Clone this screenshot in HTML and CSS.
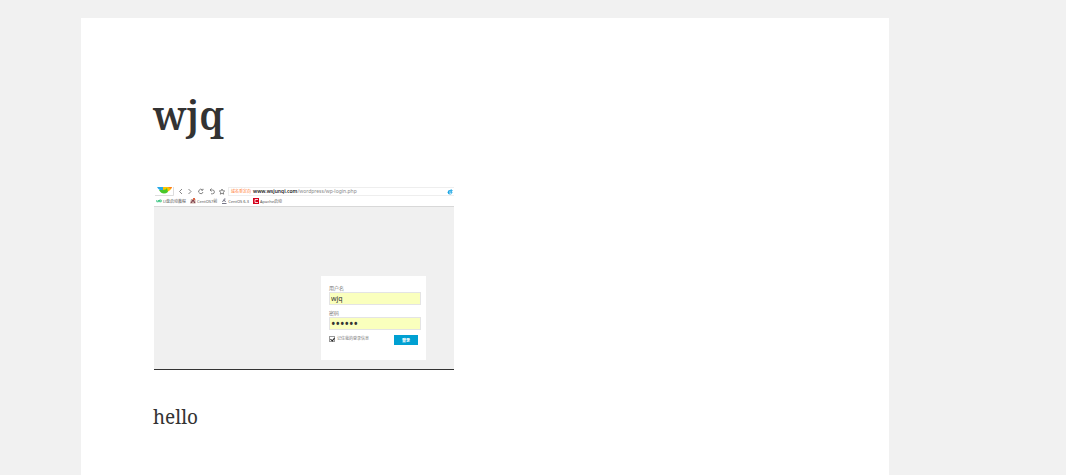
FILE: index.html
```html
<!DOCTYPE html>
<html lang="zh-CN">
<head>
<meta charset="utf-8">
<meta name="viewport" content="width=device-width, initial-scale=1">
<title>wjq</title>
<link rel="stylesheet" href="styles.css">
</head>
<body>
<article class="post">
  <h1 class="title">wjq</h1>
  <section class="shot">
    <div class="toolbar">
      <svg class="logo" width="20" height="9" viewBox="0 0 20 9"><path d="M3 0h7v4Q5 4 3 0z" fill="#26a9e8"/><path d="M9 0h9q-1 3-4 4.500L9 3z" fill="#ffc400"/><path d="M14 0h4l-1 2z" fill="#ff7a20"/><path d="M5 3l4 0q3 0 4-2l1 4q-2 1.500-4 1.500-3 0-5-3.500z" fill="#48c829"/><path d="M1 8.500h18.500V0" fill="none" stroke="#ddd"/></svg>
      <svg class="nav" width="50" height="9" viewBox="0 0 50 9" fill="none" stroke="#777" stroke-width=".9"><path d="M5 2L2.500 4.500 5 7M11.500 2L14 4.500 11.500 7M26 3V1.800M26 3.200h-1.700M25.500 3a2.200 2.200 0 1 0 .5 2M33 3h2.500a1.900 1.900 0 0 1 0 3.800h-1.500M34.500 1.500L33 3 34.500 4.500M45 2l.8 1.800 1.900.2-1.400 1.300.4 1.900-1.700-.9-1.700.9.400-1.900L42.300 4l1.900-.2z"/></svg>
      <div class="address"><span class="tag">域名重定向</span><span class="url"><b>www.wsjunqi.com</b>/wordpress/wp-login.php</span>
        <svg class="browser" width="6" height="6" viewBox="0 0 6 6"><circle cx="3" cy="3.300" r="2.300" fill="#1aa5e4"/><path d="M3.500 1H5v1" fill="none" stroke="#1aa5e4"/><path d="M2 3h2.500M2.500 4.500h2" stroke="#fff" stroke-width=".7"/></svg>
      </div>
    </div>
    <nav class="bookmarks">
      <a href="#"><svg width="6" height="6" viewBox="0 0 6 6"><path d="M.8 2v1.800h1.700V2M3.500 2v1.800h1.700V2z" fill="none" stroke="#31c27c" stroke-width=".9"/></svg>U盘启动教程</a>
      <a href="#"><svg width="6" height="6" viewBox="0 0 6 6"><path d="M1 1h4.500v4.500H0z" fill="#c9a9a0"/><path d="M1 5l2-3 2 3" fill="none" stroke="#734"/><path d="M3 0h2v2H3z" fill="#d64"/></svg>CentOS7前</a>
      <a href="#"><svg width="6" height="6" viewBox="0 0 6 6"><path d="M1 5.500h4.500M1.500 4L3 1.500 4.500 4M3 1h1.500" fill="none" stroke="#778"/></svg>CentOS 6.3</a>
      <a href="#"><svg width="6" height="6" viewBox="0 0 6 6"><path d="M0 0h6v6H0z" fill="#d5001c"/><path d="M5 1.500H2v3h3" fill="none" stroke="#fff" stroke-width=".8"/></svg>Apache启动</a>
    </nav>
    <div class="stage">
      <form class="login">
        <label for="user">用户名</label>
        <input class="field" id="user" type="text" value="wjq">
        <label for="pass">密码</label>
        <input class="field secret" id="pass" type="password" value="secret">
        <div class="actions">
          <label class="remember"><input class="tick" type="checkbox" checked>记住我的登录信息</label>
          <button class="submit" type="button">登录</button>
        </div>
      </form>
    </div>
  </section>
  <p class="text">hello</p>
</article>
</body>
</html>
```
FILE: styles.css
```css
* { box-sizing: border-box; }
html { background: #f1f1f1; }
body { margin: 0; padding-top: 18px; color: #333; font-family: "Noto Serif", "Droid Serif", "DejaVu Serif", serif; }
.post { width: 75.8%; min-height: calc(100vh - 18px); margin-left: 7.6%; padding: 73px 72px 48px; background: #fff; }
.title { margin: 0 0 48px; font-size: 39px; line-height: 48px; font-weight: 600; }
.text { margin: 33px 0 0; font-size: 19px; line-height: 28px; }
.shot { width: 300px; max-width: 100%; margin-left: 1px; border-bottom: 1px solid #333; background: #fff; font-family: "Noto Sans", "Noto Sans CJK SC", sans-serif; font-size: 5px; line-height: 7px; color: #666; }
.shot svg { flex: none; display: block; }
.toolbar { display: flex; height: 9px; align-items: center; }
.nav { margin-left: 3px; }
.address { display: flex; flex: 1; height: 9px; margin-left: 1px; padding: 0 1px 0 2px; align-items: center; border: solid #eee; border-width: 1px 0 1px 1px; white-space: nowrap; }
.tag { margin-right: 2px; font-size: 4px; color: #ff7429; }
.url { flex: 1; color: #888; }
.url b { color: #222; font-weight: 600; }
.bookmarks { display: flex; height: 11px; padding: 0 2px; align-items: center; gap: 4px; border-bottom: 1px solid #d8d8d8; font-size: 4px; white-space: nowrap; }
.bookmarks a { display: flex; align-items: center; gap: 1px; color: #555; text-decoration: none; }
.stage { display: flex; justify-content: flex-end; padding: 69px 28px 9px 0; background: #f0f0f0; }
.login { display: flex; flex-direction: column; width: 105px; height: 84px; padding: 8px 5px 0 8px; background: #fff; }
.login label { height: 8px; font-size: 5px; line-height: 8px; color: #777; }
.field { width: 100%; height: 13px; margin: 0 0 4px; padding: 0 1px; border: 1px solid #e4e4e4; border-radius: 0; background: #faffbd; color: #333; font: 7px/11px "Noto Sans", sans-serif; }
.secret { font-size: 12px; }
.actions { display: flex; justify-content: space-between; padding: 1px 3px 0 0; }
.login .remember { display: flex; align-items: center; gap: 2px; font-size: 4px; white-space: nowrap; }
.tick { appearance: none; width: 6px; height: 6px; margin: 0; border: 1px solid #999; background: #fff; }
.tick:checked::before { content: ""; display: block; width: 2px; height: 3px; margin-left: 1px; border: solid #222; border-width: 0 1px 1px 0; transform: rotate(40deg); }
.submit { width: 24px; height: 10px; padding: 0; border: 0; background: #00a0d2; color: #fff; font: 700 4px/10px "Noto Sans CJK SC", sans-serif; }
```
